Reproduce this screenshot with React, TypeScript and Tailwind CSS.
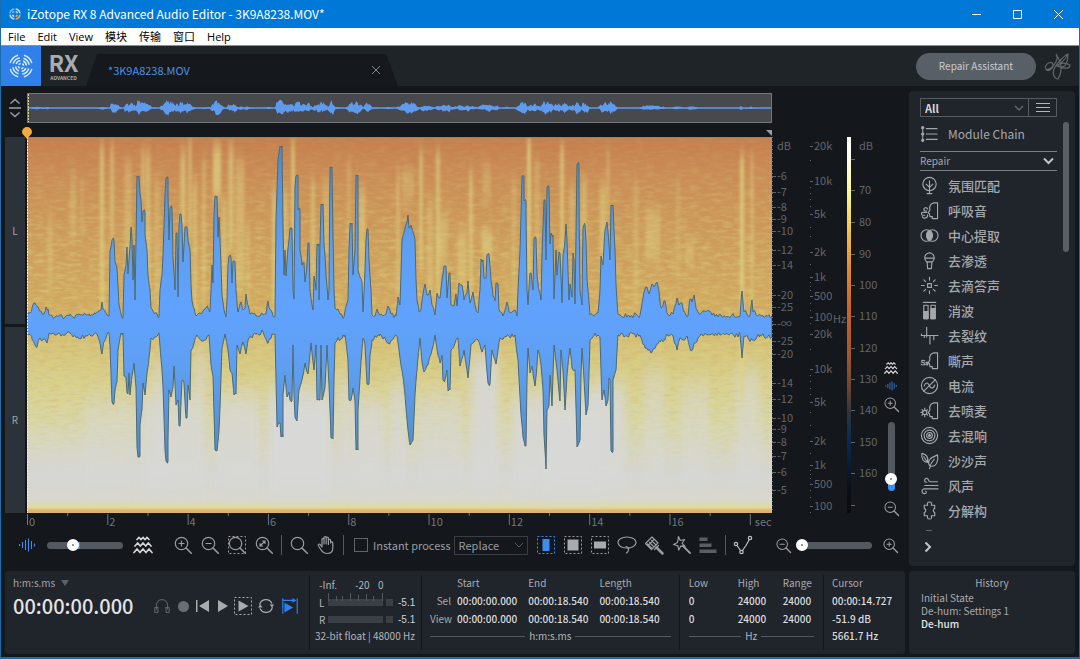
import React, { useMemo } from "react";

type Pt = [number, number];

const parse = (s: string): Pt[] =>
  s.trim().split(/\s+/).map((p) => p.split(",").map(Number) as Pt);

const TOP = parse(`27,316 30,313 32,308 35,303 38,307 41,311 44,314 46,307 48,309 49,315 55,317 60,315 65,317 70,314 73,317 80,315 85,314 90,316 95,314 98,312
101,310 102,302 103,309 106,313 109,316 110,251 112,240 114,240 115,262 117,268 119,305 121,314 123,317 124,275 126,265 127,247 128,274 130,247 131,227 132,238
133,280 134,245 135,300 136,240 137,176 139,176 140,193 141,200 142,222 143,211 145,212 145,235 147,250 148,275 150,290 151,308 153,311 157,314 159,316 160,290 162,275
163,255 165,195 166,178 168,178 168,195 169,240 170,208 172,208 173,258 175,290 176,233 177,233 178,297 179,225 180,214 181,214 182,225 183,262 185,227 187,227 188,240
190,250 191,285 192,301 194,308 196,316 200,313 203,311 206,308 208,308 210,312 211,290 212,265 213,283 214,215 215,196 217,196 218,237 219,217 220,237 221,265
222,295 224,310 226,317 227,300 228,265 229,256 231,258 232,283 233,261 235,262 236,290 238,312 240,304 241,302 243,310 245,308 246,294 248,305 250,314 256,316 260,316
266,314 268,301 269,308 273,316 275,316 276,220 278,160 280,146 282,146 283,225 284,275 285,250 286,276 288,248 289,240 290,228 292,228 293,290 294,299 295,187 296,176
298,176 298,210 300,210 300,250 302,265 304,263 305,282 307,264 308,243 309,243 310,290 312,305 313,310 314,276 316,290 317,244 319,244 319,300 320,245 321,204 323,204
324,245 325,255 326,275 328,300 329,290 330,167 332,167 333,235 334,290 335,308 338,309 340,314 344,317 347,303 348,300 349,250 350,223 352,223 353,275 355,250
356,175 358,175 358,270 360,277 362,283 363,312 365,270 366,240 367,229 368,229 369,260 371,290 372,315 375,316 377,309 380,315 386,314 388,306 391,314 396,316
398,297 400,305 402,240 404,233 407,222 408,215 409,228 411,225 413,232 415,240 416,280 417,300 419,312 421,308 424,288 425,284 427,295 430,290 432,305 435,315
437,293 440,298 442,280 444,266 446,266 447,298 449,273 450,273 451,305 454,306 456,294 457,306 459,283 462,285 464,300 467,293 468,281 470,303 473,292 475,305 478,313
480,290 481,259 483,260 484,278 486,278 487,255 489,254 491,280 493,296 495,301 496,283 498,285 499,310 503,316 507,302 509,312 515,310 517,316 518,290 520,250
521,215 522,176 524,176 524,201 526,202 526,215 527,290 528,305 530,273 531,273 533,290 534,238 536,238 537,275 539,290 541,300 542,255 544,200 545,200 546,260 547,187
549,187 550,244 551,233 553,235 554,299 556,250 557,275 559,252 560,253 562,303 563,255 565,240 566,224 567,240 569,300 570,284 572,297 573,253 574,260 575,304
577,164 579,164 579,200 580,290 582,305 583,228 585,225 586,240 587,280 590,315 594,316 598,313 600,290 601,256 603,265 605,230 607,222 609,245 610,260 611,205
613,205 615,250 616,285 618,314 621,316 640,315 644,292 647,287 649,294 652,284 654,287 657,282 659,292 661,308 665,301 667,313 673,314 677,298 679,305 682,303
684,311 688,316 690,299 692,302 694,295 696,308 700,314 709,311 712,315 740,316 742,291 744,312 750,316 752,300 753,312 760,315 772,316`);

const BOTTOM = parse(`27,333 32,339 37,347 40,338 43,340 47,343 49,333 55,335 70,333 78,338 88,335 97,334 100,343 102,354 104,342 107,334 109,334 110,345 112,402 114,403 115,390 117,382
118,350 121,333 123,333 124,376 126,378 127,393 128,394 129,373 130,395 132,376 134,363 136,387 137,447 138,457 140,456 140,425 142,410 143,383 145,395 147,373
149,358 151,338 155,337 159,333 162,370 163,387 165,450 166,461 168,461 168,440 169,390 171,397 173,387 174,366 176,405 178,400 179,426 180,426 182,380 184,383
186,418 187,418 188,385 190,400 191,350 194,343 197,335 203,341 209,335 211,365 213,376 215,450 217,451 219,430 220,408 222,348 225,334 228,350 230,370 232,373 234,395
236,394 237,345 240,354 243,342 246,354 248,340 253,335 256,334 263,332 268,343 272,334 275,334 276,380 277,427 280,423 281,437 283,437 283,395 285,375 287,397 289,392 290,400 292,400
293,345 294,395 295,417 297,421 299,390 302,380 305,363 308,374 311,343 314,370 316,345 317,400 319,400 320,400 321,345 322,400 325,387 327,345 329,385 331,438 333,439 334,380
335,343 343,335 345,335 348,360 349,400 351,400 353,388 355,401 356,450 358,450 358,410 361,362 363,338 365,345 367,384 369,384 370,355 372,340 380,334 388,343 397,336 402,370 405,395 408,430
410,445 413,440 415,395 417,370 420,338 422,362 424,372 428,365 432,350 435,335 438,355 440,363 442,355 443,380 445,380 447,370 448,391 450,390 451,350 455,343 458,338 460,366
464,350 468,378 471,345 478,340 482,352 485,345 488,383 490,384 492,350 496,364 500,338 515,335 518,360 521,415 523,437 525,446 526,446 527,380 528,348 530,373 532,366 535,386
537,365 538,350 541,365 543,390 544,435 546,469 547,410 549,405 550,375 552,406 554,345 558,380 560,401 561,350 563,370 565,410 567,375 570,348 572,368 575,370 577,447 580,440 581,375 582,348
584,380 586,415 588,405 590,340 595,333 600,338 602,400 604,390 606,406 608,400 609,378 610,380 611,451 613,451 613,380 616,370 618,335 640,335 645,348 652,352 660,342 665,340 667,335 673,336 677,350
680,338 683,340 687,336 691,351 698,338 702,335 740,335 742,358 744,336 752,340 760,335 772,337`);

const jitter = (x: number, seed: number) => {
  const v = Math.sin(x * 12.9898 + seed * 78.233) * 43758.5453;
  return v - Math.floor(v);
};

const densify = (pts: Pt[], seed: number): Pt[] => {
  const out: Pt[] = [];
  pts.forEach(([x, y], i) => {
    out.push([x, y]);
    const next = pts[i + 1];
    if (!next) return;
    for (let k = x + 1.5; k < next[0]; k += 1.5) {
      const t = (k - x) / (next[0] - x);
      out.push([k, y + (next[1] - y) * t + (jitter(k, seed) - 0.5) * 5]);
    }
  });
  return out;
};

const toPath = (top: Pt[], bottom: Pt[]) =>
  "M" + [...top, ...[...bottom].reverse()].map(([x, y]) => `${x} ${y.toFixed(1)}`).join("L") + "Z";

const STREAKS: [number, number, number, number, number][] = [
  [50, 215, 290, 5, 0.35], [73, 175, 240, 6, 0.3], [82, 180, 230, 3, 0.3], [102, 145, 315, 4, 0.65], [112, 145, 240, 4, 0.5],
  [128, 160, 290, 7, 0.35], [148, 150, 310, 5, 0.5], [143, 150, 200, 3, 0.6], [157, 180, 310, 6, 0.3], [183, 150, 230, 5, 0.6], [190, 137, 240, 3, 0.6],
  [195, 180, 310, 4, 0.5], [204, 160, 310, 3, 0.5], [217, 145, 200, 8, 0.7], [224, 200, 300, 5, 0.5], [231, 145, 250, 5, 0.6], [240, 160, 290, 9, 0.4],
  [248, 220, 310, 3, 0.4], [274, 190, 310, 4, 0.6], [285, 190, 260, 5, 0.5], [293, 140, 240, 3, 0.8], [313, 180, 280, 4, 0.5], [326, 180, 250, 7, 0.35],
  [349, 160, 240, 4, 0.3], [362, 190, 300, 7, 0.5], [398, 170, 300, 3, 0.5], [408, 170, 200, 12, 0.35], [421, 150, 270, 3, 0.7], [430, 200, 300, 6, 0.35],
  [438, 150, 310, 4, 0.6], [443, 215, 262, 9, 0.4], [462, 230, 290, 9, 0.45], [471, 170, 310, 3, 0.7], [487, 230, 260, 10, 0.6], [487, 165, 200, 8, 0.3],
  [514, 180, 310, 5, 0.3], [529, 137, 290, 3, 0.95], [537, 160, 260, 5, 0.35], [562, 145, 270, 3, 0.8], [572, 185, 240, 5, 0.4], [584, 180, 240, 6, 0.45],
  [603, 185, 260, 7, 0.5], [608, 150, 220, 3, 0.4], [636, 180, 310, 5, 0.3], [653, 210, 260, 15, 0.4], [678, 180, 280, 4, 0.25], [690, 240, 265, 8, 0.4],
  [742, 155, 400, 4, 0.75], [752, 155, 330, 3, 0.45],
];

const WHITES: [number, number, number, number, number][] = [
  [60, 440, 490, 70, 0.4], [110, 400, 485, 50, 0.5], [158, 360, 485, 10, 0.7], [170, 395, 490, 60, 0.8], [200, 350, 490, 10, 0.7], [238, 395, 490, 44, 0.8], [300, 390, 495, 64, 1],
  [345, 380, 490, 14, 0.7], [368, 400, 490, 32, 0.8], [398, 385, 490, 16, 0.8], [440, 395, 490, 44, 0.6], [485, 355, 490, 28, 0.9], [530, 395, 495, 36, 0.9], [572, 395, 495, 60, 1],
  [608, 385, 490, 34, 0.9], [655, 370, 490, 20, 0.5], [695, 385, 490, 26, 0.5], [748, 370, 490, 24, 0.6],
];

function Spectrogram() {
  const wave = useMemo(() => toPath(densify(TOP, 1), densify(BOTTOM, 2)), []);
  return (
    <svg className="block h-[376px] w-full" viewBox="27 137 745 376" preserveAspectRatio="none" colorInterpolationFilters="sRGB" role="img" aria-label="Spectrogram">
      <defs>
        <linearGradient id="heat" x1="0" y1="0" x2="0" y2="1">
          <stop offset="0" stopColor="#c57f4f" />
          <stop offset="0.1" stopColor="#ca8c56" />
          <stop offset="0.27" stopColor="#cd9c5c" />
          <stop offset="0.45" stopColor="#d1aa62" />
          <stop offset="0.55" stopColor="#d5c27a" />
          <stop offset="0.66" stopColor="#d8d294" />
          <stop offset="0.76" stopColor="#d8d8ae" />
          <stop offset="0.84" stopColor="#d7d7c6" />
          <stop offset="0.9" stopColor="#d5d5d3" />
          <stop offset="0.965" stopColor="#d8d8cc" />
          <stop offset="0.985" stopColor="#e0da9c" />
          <stop offset="0.994" stopColor="#dcb46a" />
          <stop offset="1" stopColor="#e5cf78" />
        </linearGradient>
        <linearGradient id="waveFill" x1="0" y1="0" x2="0" y2="1">
          <stop offset="0" stopColor="#538bc8" />
          <stop offset="0.32" stopColor="#5f9ff2" />
          <stop offset="0.5" stopColor="#60a2fe" />
          <stop offset="0.68" stopColor="#5f9ff2" />
          <stop offset="1" stopColor="#538bc0" />
        </linearGradient>
        <linearGradient id="fadeGrain" x1="0" y1="0" x2="0" y2="1">
          <stop offset="0" stopColor="#fff" stopOpacity="0.08" />
          <stop offset="0.3" stopColor="#fff" stopOpacity="0.5" />
          <stop offset="0.7" stopColor="#fff" stopOpacity="0.7" />
          <stop offset="0.82" stopColor="#fff" stopOpacity="0.3" />
          <stop offset="0.9" stopColor="#fff" stopOpacity="0" />
        </linearGradient>
        <mask id="grainMask">
          <rect x="27" y="137" width="745" height="376" fill="url(#fadeGrain)" />
        </mask>
        <filter id="grain" x="0" y="0" width="1" height="1">
          <feTurbulence type="fractalNoise" baseFrequency="0.09 0.3" numOctaves="3" seed="4" />
          <feColorMatrix values="0 0 0 0 0.86  0 0 0 0 0.83  0 0 0 0 0.5  2 0 0 0 -0.8" />
        </filter>
        <filter id="grainDark" x="0" y="0" width="1" height="1">
          <feTurbulence type="fractalNoise" baseFrequency="0.1 0.35" numOctaves="2" seed="11" />
          <feColorMatrix values="0 0 0 0 0.8  0 0 0 0 0.6  0 0 0 0 0.32  0 1.6 0 0 -0.7" />
        </filter>
        <filter id="soft" x="-1" y="-0.2" width="3" height="1.4">
          <feGaussianBlur stdDeviation="1.6 8" />
        </filter>
        <filter id="haze" x="-1" y="-0.5" width="3" height="2">
          <feGaussianBlur stdDeviation="5 12" />
        </filter>
      </defs>
      <rect x="27" y="137" width="745" height="376" fill="url(#heat)" />
      <g mask="url(#grainMask)">
        <rect x="27" y="137" width="745" height="376" filter="url(#grainDark)" opacity="0.6" />
        <rect x="27" y="137" width="745" height="376" filter="url(#grain)" />
      </g>
      {WHITES.map(([x, a, b, w, o], i) => (
        <rect key={i} x={x - w / 2} y={a} width={w} height={b - a} fill="#d8d8d6" opacity={o} filter="url(#haze)" />
      ))}
      {STREAKS.map(([x, a, b, w, o], i) => (
        <rect key={i} x={x - w / 2} y={a} width={w} height={b - a} fill="#ded486" opacity={o} filter="url(#soft)" />
      ))}
      <rect x="27" y="510" width="745" height="3" fill="#ddb66c" />
      <rect x="27" y="137" width="745" height="1" fill="#b87a4c" />
      <path d={wave} fill="url(#waveFill)" stroke="#4d6a72" strokeWidth="1" strokeLinejoin="round" />
      <path d="M27.5 137V513" stroke="#fff6b0" strokeDasharray="2 1" />
    </svg>
  );
}

function Overview() {
  const d = useMemo(() => {
    const amp = (x: number, v: number, seed: number) =>
      0.5 + Math.pow(Math.max(0, v - 13), 0.7) * 0.21 * (0.55 + jitter(x, seed) * 0.65);
    const top = densify(TOP, 5).map(([x, y]) => [x, 14 - amp(x, 324 - y, 8)] as Pt);
    const bottom = densify(BOTTOM, 6).map(([x, y]) => [x, 14 + amp(x, y - 324, 9)] as Pt);
    return toPath(top, bottom);
  }, []);
  return (
    <svg className="block h-[28px] w-full" viewBox="27 0 745 28" preserveAspectRatio="none" role="img" aria-label="Overview">
      <path d={d} fill="#5e9bee" />
      <path d="M27 14H772" stroke="#5e9bee" />
      <path d="M27.5 0V28" stroke="#e8d98a" strokeDasharray="2 1" />
    </svg>
  );
}

const AMP: [string, number][] = [
  ["-6", 176], ["-7", 192], ["-8", 207], ["-9", 219], ["-10", 231], ["-12", 250], ["-14", 265], ["-20", 295], ["-25", 307], ["-∞", 324],
  ["-25", 341], ["-20", 354], ["-14", 383], ["-12", 399], ["-10", 418], ["-9", 429], ["-8", 442], ["-7", 456], ["-6", 472], ["-5", 490],
];
const FREQ: [string, number][] = [
  ["20k", 146], ["10k", 181], ["5k", 214], ["2k", 252], ["1k", 277], ["500", 296], ["100", 317],
  ["20k", 334], ["10k", 369], ["5k", 402], ["2k", 441], ["1k", 465], ["500", 484], ["100", 506],
];
const FREQ_DOTS = [160, 187, 193, 199, 206, 227, 236, 264, 282, 286, 290, 303, 310, 323, 349, 375, 381, 388, 394, 412, 425, 453, 470, 474, 478, 490, 497, 512];
const LEVEL: [string, number][] = [
  ["70", 190], ["80", 222], ["90", 254], ["100", 285], ["110", 316], ["120", 348], ["130", 379], ["140", 410], ["150", 442], ["160", 473],
];

function Scales() {
  return (
    <svg className="block h-[376px] w-[110px] shrink-0 text-[11px]" viewBox="772 137 110 376" fill="#62666a" role="img" aria-label="Scales">
      <defs>
        <linearGradient id="bar" x1="0" y1="0" x2="0" y2="1">
          <stop offset="0" stopColor="#fff" />
          <stop offset="0.06" stopColor="#fffde8" />
          <stop offset="0.15" stopColor="#fdf78e" />
          <stop offset="0.24" stopColor="#f6c94e" />
          <stop offset="0.35" stopColor="#e08a30" />
          <stop offset="0.46" stopColor="#c9622c" />
          <stop offset="0.58" stopColor="#a4572f" />
          <stop offset="0.67" stopColor="#6b4432" />
          <stop offset="0.73" stopColor="#33343c" />
          <stop offset="0.8" stopColor="#0d2b55" />
          <stop offset="0.87" stopColor="#0a1c38" />
          <stop offset="0.94" stopColor="#0b0e12" />
          <stop offset="1" stopColor="#090b0e" />
        </linearGradient>
      </defs>
      <path d="M772.5 137V513" stroke="#62666a" strokeWidth="1" strokeDasharray="1 3" />
      <text x="777" y="150">dB</text>
      {AMP.map(([t, y]) => (
        <g key={y}>
          <rect x="772" y={y} width="4" height="1" />
          <text x="777" y={y + 4}>{t}</text>
        </g>
      ))}
      {FREQ.map(([t, y]) => (
        <g key={y}>
          <rect x="810" y={y} width="3" height="1" />
          <text x="814" y={y + 4}>{t}</text>
        </g>
      ))}
      {FREQ_DOTS.map((y) => (
        <rect key={y} x="810" y={y} width="1" height="1" />
      ))}
      <text x="833" y="323">Hz</text>
      <rect x="847" y="137" width="4" height="376" fill="url(#bar)" />
      <text x="859" y="150">dB</text>
      {LEVEL.map(([t, y]) => (
        <g key={y}>
          <rect x="851" y={y} width="4" height="1" />
          <text x="859" y={y + 4}>{t}</text>
        </g>
      ))}
      <rect x="851" y="159" width="4" height="1" />
      <rect x="851" y="505" width="4" height="1" />
    </svg>
  );
}

function TimeRuler() {
  const step = 10.78;
  return (
    <svg className="block h-[17px] w-full text-[11px]" fill="#72767a" role="img" aria-label="Time ruler">
      {Array.from({ length: 10 }, (_, i) => (
        <g key={i}>
          <rect x={`${i * step}%`} y="1" width="1" height="11" />
          <rect x={`${(i + 0.5) * step}%`} y="0" width="1" height="3" />
          <svg x={`${i * step}%`} overflow="visible">
            {i < 9 ? <text x="2" y="13">{i * 2}</text> : <text x="5" y="13">sec</text>}
          </svg>
        </g>
      ))}
    </svg>
  );
}

type IconProps = { children: React.ReactNode; className?: string };
function Icon({ children, className = "size-5" }: IconProps) {
  return (
    <svg className={`${className} shrink-0`} viewBox="0 0 20 20" fill="none" stroke="currentColor" strokeWidth="1.2" strokeLinecap="round" strokeLinejoin="round" aria-hidden="true">
      {children}
    </svg>
  );
}

const Lens = ({ children }: { children?: React.ReactNode }) => (
  <>
    <circle cx="8.5" cy="8.5" r="6.2" />
    <path d="M13 13l5.3 5.3" strokeWidth="1.6" />
    {children}
  </>
);
const Dashed = () => <rect x="1.5" y="1.5" width="17" height="17" strokeDasharray="2 2" strokeLinecap="butt" strokeWidth="1" />;
const WaveBars = () => <path d="M2.500 9v2M5.500 7v6M8.500 5v10M11.500 3.500v13M14.500 6v8M17.500 8.500v3" strokeWidth="1.1" strokeLinecap="butt" />;
const Zigzags = () => (
  <g strokeWidth="1.700" strokeLinejoin="miter">
    <path d="M4 4.500l2-2 2 2 2-2 2 2 2-2 2 2" />
    <path d="M2 11l2.700-3 2.600 3 2.700-3 2.700 3 2.600-3 2.700 3" />
    <path d="M1 17.500l3-3.500 3 3.500 3-3.500 3 3.500 3-3.500 3 3.500" />
  </g>
);
const Face = () => <path d="M11.500 3.500L14 2h4.500v16.500H13v-2h-2.500l-.5-3-1.500-1 2-3-.5-3z" />;

const MODULES: [string, React.ReactNode][] = [
  ["氛围匹配", <><circle cx="10" cy="8.500" r="7" /><path d="M10 5v13M7.500 18.500h5M10 12L6.500 8.500M10 12l3.500-3.500" /></>],
  ["呼吸音", <><Face /><path d="M8 8.500c-1-2.500-4-1.500-4 .5 0 1.500 2 1.500 3 1.500M7 12H3c-2 0-2 3 0 3h2M8 14.500c.5 4-5 4.500-5.500 2" /></>],
  ["中心提取", <><circle cx="7" cy="10" r="6" /><circle cx="13" cy="10" r="6" /><path d="M10 4.800a6 6 0 0 1 0 10.400a6 6 0 0 1 0-10.400z" fill="currentColor" /></>],
  ["去渗透", <><path d="M5 7a5 5 0 0 1 10 0c0 2-1 3.500-2 4.500H7C6 10.500 5 9 5 7zM5 7.500h10M7.500 11.500l.5 7h4l.5-7" /></>],
  ["去滴答声", <><rect x="8" y="8" width="4" height="4" /><path d="M10 1.500v3M10 15.500v3M1.500 10h3M15.500 10h3M4 4l2 2M14 14l2 2M4 16l2-2M14 6l2-2" /></>],
  ["消波", <><path d="M3.500 1.500h13" /><rect x="4" y="4.500" width="4.500" height="14" /><rect x="11.500" y="4.500" width="4.500" height="14" /><path d="M4 11h4.500v7.500H4zM11.500 8H16v10.500h-4.500z" fill="currentColor" /></>],
  ["去裂纹", <><path d="M1.500 8.500V10h17.500M7 1.500v10M10.500 10v9M14.500 10v4.500M4.500 10v2" /></>],
  ["嘶声", <><Face /><path d="M5 10.500c-1-1.200-3.500-.8-3.300.6.200 1.500 3.500.8 3.300 2.400-.2 1.600-3 1.600-3.800.4M8.300 12c-.8-.8-2-.4-2 .3 0 .9 2 .6 2 1.600 0 .9-1.600 1-2.200.3" /></>],
  ["电流", <><circle cx="10" cy="10" r="8.500" /><path d="M4 16L16 4M4.500 10.500c1-4 3.500-4 5-1 1.500 4 4.500 4.500 6 0" /></>],
  ["去喷麦", <><Face /><circle cx="5" cy="12" r="2.200" /><path d="M5 7.500v2M5 14.500v2M1 12h1.500M2 9l1.300 1.200M2 15l1.300-1.200M7.800 9.200L7 10M8 15l-1-1.200" /></>],
  ["去混响", <><circle cx="10" cy="10" r="8.500" /><circle cx="10" cy="10" r="5.700" /><circle cx="10" cy="10" r="3" /><circle cx="10" cy="10" r="1" fill="currentColor" /></>],
  ["沙沙声", <><path d="M2 2.500c5 1 7 4.500 6 9.500-4 0-7-3.500-6-9.500zM4 6l4 6M18.500 4c1 6-1 12-6 12-4 0-4.500-5-1.500-8 2-2 5-2 7.500-4zM10 18.500c1-5 3-8 5-10" /></>],
  ["风声", <><path d="M7 6.500c-3 .5-3-4.500.5-4 2 .5 1 3.500 3 3.500h8M5 10h14M19 13.500H5c-4 0-3.500 5 0 5 2 0 2-2 1-2.500" /></>],
  ["分解构", <path d="M4.500 4.500h3.500c0-1-1-3.500 2-3.500s2 2.500 2 3.500h3.500V8c-1 0-1.500 0-1.500 2s.5 2 1.500 2v3.500H12c0 1 1 3.500-2 3.500s-2-2.500-2-3.500H4.500V12C6 12 6 11 6 10s0-2-1.500-2z" />],
];

function IconButton({ label, children, className = "" }: { label: string; children: React.ReactNode; className?: string }) {
  return (
    <button type="button" aria-label={label} className={`flex shrink-0 items-center justify-center ${className}`}>
      {children}
    </button>
  );
}

const thumb =
  "[&::-webkit-slider-thumb]:size-3 [&::-webkit-slider-thumb]:appearance-none [&::-webkit-slider-thumb]:rounded-full [&::-webkit-slider-thumb]:border-[5px] [&::-webkit-slider-thumb]:border-white [&::-webkit-slider-thumb]:bg-[#777]";

const Rule = () => <span className="h-5 w-px shrink-0 bg-[#565b60]" />;
const Divider = () => <span className="my-1 w-px shrink-0 bg-[#14171b]" />;

function UnitLine({ unit }: { unit: string }) {
  return (
    <div className="flex h-4 items-center gap-1 leading-4 text-[#b3b6b9]">
      <span className="h-px flex-1 bg-[#54585e]" />
      {unit}
      <span className="h-px flex-1 bg-[#54585e]" />
    </div>
  );
}

function Toolbar() {
  return (
    <div className="flex h-[30px] items-center pr-[10px] text-[#9a9da0]">
      <span className="ml-4 text-[#3f8cf0]"><Icon><WaveBars /></Icon></span>
      <input type="range" aria-label="Waveform and spectrogram balance" defaultValue={31}
        className={`ml-[10px] h-[7px] w-[76px] appearance-none rounded-full bg-[linear-gradient(90deg,#54585f_35%,#3f8cf0_35%,#3f8cf0_43%,#54585f_43%)] ${thumb}`} />
      <span className="ml-[10px] text-[#d5d6d7]"><Icon><Zigzags /></Icon></span>
      <div className="ml-5 flex items-center gap-[7px]">
        <IconButton label="Zoom in"><Icon><Lens><path d="M8.500 6v5M6 8.500h5" /></Lens></Icon></IconButton>
        <IconButton label="Zoom out"><Icon><Lens><path d="M6 8.500h5" /></Lens></Icon></IconButton>
        <IconButton label="Zoom to selection"><Icon><Dashed /><Lens /></Icon></IconButton>
        <IconButton label="Zoom to fit"><Icon><Lens><path d="M6 11l5-5M8.500 6H11v2.500M6 8.500V11h2.500" /></Lens></Icon></IconButton>
        <Rule />
        <IconButton label="Zoom tool"><Icon><Lens /></Icon></IconButton>
        <IconButton label="Hand tool">
          <Icon><path d="M6 12V4.500c0-1.500 2-1.500 2 0V9V2.800c0-1.500 2.200-1.500 2.200 0V9V3.300c0-1.500 2.200-1.500 2.200 0V9.500V5.500c0-1.500 2.200-1.500 2.200 0V8c0-1.400 2.200-1.400 2.200 0v5c0 3-1.500 5.500-5.500 5.500-3 0-5-1.500-6.500-4L2.500 11c-.8-1.500 1-2.500 2-1.200z" /></Icon>
        </IconButton>
        <Rule />
      </div>
      <label className="ml-[10px] flex items-center gap-[5px] whitespace-nowrap text-[11px] leading-4">
        <input type="checkbox" className="size-[14px] appearance-none border border-[#62666a]" />
        Instant process
      </label>
      <div className="relative ml-[3px] flex items-center">
        <select aria-label="Process mode" className="h-[19px] w-[74px] appearance-none border border-[#3b3f44] bg-transparent pl-1 text-[11px] leading-4">
          <option>Replace</option>
        </select>
        <svg className="pointer-events-none absolute right-1 h-2 w-[10px]" viewBox="0 0 10 8" fill="none" stroke="#55595e" aria-hidden="true"><path d="M1 2l4 4 4-4" /></svg>
      </div>
      <div className="ml-2 flex items-center gap-[7px]">
        <IconButton label="Time selection" className="text-[#3f8cf0]"><Icon><Dashed /><path d="M6.500 4h7v12h-7z" fill="currentColor" stroke="none" /></Icon></IconButton>
        <IconButton label="Time-frequency selection"><Icon><Dashed /><path d="M4.500 4.500h11v11h-11z" fill="#a9acaf" stroke="none" /></Icon></IconButton>
        <IconButton label="Frequency selection"><Icon><Dashed /><path d="M4 6.500h12v7H4z" fill="#a9acaf" stroke="none" /></Icon></IconButton>
        <IconButton label="Lasso"><Icon><ellipse cx="10" cy="7.500" rx="9" ry="5.500" /><path d="M11 13c1 2 .5 3.500-1.500 5M9 11.500l3 1.500" /></Icon></IconButton>
        <IconButton label="Brush">
          <Icon><path d="M1.500 8.500L8 2l6 6-6.500 6.500zM10 4.500L4.500 10M3.500 9l4 4M5.500 7.500l4 4M7.500 5.500l4 4" /><path d="M12.500 12.500l6 6" strokeWidth="2.500" /><path d="M10.500 14.500l4-4" /></Icon>
        </IconButton>
        <IconButton label="Magic wand"><Icon><path d="M7.500 1.500l1.700 4 4.300-1-2.300 3.800 2.800 3.200-4.200-.4-2 4-.9-4.300L2.500 9.500 6.500 7.500z" /><path d="M12 11l7 7" strokeWidth="1.800" /></Icon></IconButton>
        <IconButton label="Harmonics"><Icon><g fill="#5b5f64" stroke="none"><path d="M1.500 2.500h8v3.500h-8zM1.500 8.500h12v3.500h-12zM1.500 14.500h17v3.500h-17z" /></g></Icon></IconButton>
        <Rule />
        <IconButton label="Gain envelope" className="text-[#c0c2c4]"><Icon><circle cx="3" cy="9" r="1.700" /><circle cx="8.500" cy="17" r="1.700" /><circle cx="17" cy="3" r="1.700" /><path d="M4 10.500l3.500 5M9.500 15.500L13 10.500l3.300-6" /></Icon></IconButton>
      </div>
      <div className="ml-auto flex items-center">
        <IconButton label="Zoom out time"><Icon className="size-[17px]"><Lens><path d="M6 8.500h5" /></Lens></Icon></IconButton>
        <input type="range" aria-label="Time zoom" defaultValue={0} className={`ml-1 h-[7px] w-[76px] appearance-none rounded-full bg-[#54585f] ${thumb}`} />
        <IconButton label="Zoom in time" className="ml-[10px]"><Icon className="size-[17px]"><Lens><path d="M8.500 6v5M6 8.500h5" /></Lens></Icon></IconButton>
      </div>
    </div>
  );
}

function Meter({ name }: { name: string }) {
  return (
    <div className="flex h-[17px] items-center leading-4">
      <span className="w-[9px]">{name}</span>
      <span className="h-[7px] w-[55px] bg-[#3a3e45]" />
      <span className="ml-[3px] size-[7px] bg-[#3a3e45]" />
      <span className="ml-[5px] font-['Liberation_Sans',sans-serif] text-[#cfd1d3]">-5.1</span>
    </div>
  );
}

function Footer() {
  const head = "p-0 text-left font-normal text-[#a8abae]";
  return (
    <section className="flex min-w-0 flex-1 rounded-[3px] bg-[#20242b] text-[10px]">
      <div className="w-[304px] shrink-0 pl-2 pt-1">
        <button type="button" className="flex items-center gap-[6px] leading-4 text-[#a0a3a6]">
          h:m:s.ms
          <svg className="h-[6px] w-2" viewBox="0 0 8 6" fill="#5d6166" aria-hidden="true"><path d="M0 0h8L4 6z" /></svg>
        </button>
        <div className="mt-[3px] flex items-center">
          <span className="w-[141px] text-[20px] font-medium leading-6 text-[#e2e3e4]">00:00:00.000</span>
          <div className="flex items-center gap-[5px] text-[#a9acaf]">
            <IconButton label="Monitor" className="text-[#676b70]"><Icon className="size-4"><path d="M3 14V9a7 7 0 0 1 14 0v5M3 12H1v6h4v-6zM15 12h4v6h-4v-6z" /></Icon></IconButton>
            <IconButton label="Record" className="size-4"><span className="size-[11px] rounded-full bg-[#6a6e73]" /></IconButton>
            <IconButton label="Rewind"><svg className="h-3 w-[13px]" viewBox="0 0 13 12" fill="currentColor"><path d="M0 0h1.500v12H0zM13 0v12L3 6z" /></svg></IconButton>
            <IconButton label="Play" className="ml-1"><svg className="h-3 w-[10px]" viewBox="0 0 10 12" fill="currentColor"><path d="M0 0v12l10-6z" /></svg></IconButton>
            <IconButton label="Play selection"><Icon><Dashed /><path d="M5.500 4.500v11l10-5.500z" fill="currentColor" stroke="none" /></Icon></IconButton>
            <IconButton label="Loop"><Icon className="size-4"><path d="M2.200 8a8 8 0 0 1 15-1.500M17.800 12a8 8 0 0 1-15 1.500" strokeWidth="1.600" /><path d="M14.500 8h5.500l-2.500 4zM0 12h5.500L3 8z" fill="currentColor" stroke="none" /></Icon></IconButton>
            <IconButton label="Playhead follows" className="ml-[3px] text-[#2f80ee]"><Icon className="size-4"><path d="M1 1v18M19 1v18M2 3h14" strokeWidth="1.500" strokeDasharray="3 1" /><path d="M3 6v12l11-6zM13 0v6l5-3z" fill="currentColor" stroke="none" /></Icon></IconButton>
          </div>
        </div>
      </div>
      <Divider />
      <div className="w-[111px] shrink-0 pl-[5px] pt-[6px] text-[#b3b6b9]">
        <div className="flex h-4 leading-4">
          <span className="w-9 pl-1">-Inf.</span><span className="w-[23px] pl-1">-20</span><span className="pl-1">0</span>
        </div>
        <div className="relative pl-1 pt-px">
          <svg className="absolute left-[13px] top-0 h-2 w-[55px]" viewBox="0 0 55 8" aria-hidden="true"><path d="M.5 0v8M8.500 3v5M14.500 3v5M22.500 0v8M30.500 2v6M38.500 1v7M45.500 3v5M54.500 0v8" stroke="#54585e" /></svg>
          <Meter name="L" />
          <Meter name="R" />
        </div>
        <div className="whitespace-nowrap leading-4">32-bit float | 48000 Hz</div>
      </div>
      <Divider />
      <div className="min-w-0 grow-[5] basis-[256px] px-2 pt-[3px]">
        <table className="w-full table-fixed border-collapse whitespace-nowrap leading-[18px]">
          <thead><tr><td className="w-[27px] p-0" /><th className={head}>Start</th><th className={head}>End</th><th className={head}>Length</th></tr></thead>
          <tbody className="font-medium text-[#dcddde]">
            {["Sel", "View"].map((r) => (
              <tr key={r} className="h-[18px]">
                <th className="p-0 pr-[6px] text-right font-normal text-[#a8abae]">{r}</th>
                <td className="p-0">00:00:00.000</td><td className="p-0">00:00:18.540</td><td className="p-0">00:00:18.540</td>
              </tr>
            ))}
          </tbody>
        </table>
        <UnitLine unit="h:m:s.ms" />
      </div>
      <Divider />
      <div className="min-w-0 grow-[3] basis-[143px] px-[9px] pt-[3px]">
        <table className="w-full table-fixed border-collapse whitespace-nowrap leading-[18px]">
          <thead><tr><th className={`${head} w-[49px]`}>Low</th><th className={`${head} w-[45px]`}>High</th><th className={head}>Range</th></tr></thead>
          <tbody className="font-medium text-[#dcddde]">
            {[0, 1].map((r) => (
              <tr key={r} className="h-[18px]"><td className="p-0">0</td><td className="p-0">24000</td><td className="p-0">24000</td></tr>
            ))}
          </tbody>
        </table>
        <UnitLine unit="Hz" />
      </div>
      <Divider />
      <div className="w-[81px] shrink-0 whitespace-nowrap pl-2 pt-[3px] font-medium leading-[18px] text-[#dcddde]">
        <div className="font-normal text-[#a8abae]">Cursor</div>
        <div>00:00:14.727</div>
        <div>-51.9 dB</div>
        <div className="leading-4">5661.7 Hz</div>
      </div>
    </section>
  );
}

function ModulePanel() {
  return (
    <aside className="mr-1 mt-[5px] flex w-[166px] shrink-0 flex-col rounded-[4px] bg-[#20242b] pl-[11px] pt-[7px] text-[#a4a8ab]">
      <div className="flex w-[137px] border border-[#565b60]">
        <div className="relative flex flex-1 items-center">
          <select aria-label="Module filter" className="h-[17px] w-full appearance-none bg-transparent pl-1 text-[11px] font-bold leading-4 text-[#d5d6d8]">
            <option>All</option>
          </select>
          <svg className="pointer-events-none absolute right-1 h-2 w-[10px]" viewBox="0 0 10 8" fill="none" stroke="#62666b" strokeWidth="1.500" aria-hidden="true"><path d="M1 2l4 4 4-4" /></svg>
        </div>
        <button type="button" aria-label="Menu" className="flex w-[28px] flex-col items-center justify-center gap-[3px] border-l border-[#565b60]">
          <span className="h-px w-[14px] bg-[#b4b7ba]" /><span className="h-px w-[14px] bg-[#b4b7ba]" /><span className="h-px w-[14px] bg-[#b4b7ba]" />
        </button>
      </div>
      <div className="flex">
        <div className="w-[137px]">
          <button type="button" className="flex h-[34px] w-full items-center gap-[10px] text-[12px] leading-4">
            <Icon className="size-[18px]"><path d="M3 3v14M7 4h12M7 10h12M7 16h12" /><circle cx="3" cy="3" r="1.200" fill="currentColor" /><circle cx="3" cy="10" r="1.200" fill="currentColor" /><circle cx="3" cy="17" r="1.200" fill="currentColor" /></Icon>
            Module Chain
          </button>
          <button type="button" className="flex h-5 w-full items-center justify-between border-y border-[#7b7f83] pr-[3px] text-[10px] leading-4">
            Repair
            <svg className="h-2 w-[11px]" viewBox="0 0 11 8" fill="none" stroke="#c0c3c6" strokeWidth="2" aria-hidden="true"><path d="M1 1.500l4.500 4.500L10 1.500" /></svg>
          </button>
          <ul className="pt-[2px]">
            {MODULES.map(([name, icon]) => (
              <li key={name}>
                <button type="button" className="flex h-[25px] w-full items-center gap-[9px] text-[13px] font-medium leading-4">
                  <Icon className="size-[19px]">{icon}</Icon>
                  {name}
                </button>
              </li>
            ))}
          </ul>
          <div className="ml-[6px] mt-[7px] h-px w-[6px] bg-[#5f6368]" />
        </div>
        <div className="ml-[6px] mt-[5px] h-[130px] w-[6px] rounded-full bg-[#5a5f66]" />
      </div>
      <button type="button" aria-label="Show more" className="mb-3 ml-1 mt-[10px] w-3">
        <svg className="h-3 w-2" viewBox="0 0 8 12" fill="none" stroke="#c4c7ca" strokeWidth="2" aria-hidden="true"><path d="M1.500 1.500L6 6l-4.500 4.500" /></svg>
      </button>
    </aside>
  );
}

export default function App() {
  return (
    <div className="flex min-h-screen flex-col border-x border-b-2 border-[#1b6cab] bg-[#14171b] font-['Noto_Sans_CJK_SC',sans-serif]">
      <header className="flex h-7 items-center bg-[#0078d7] pl-2 text-[12px] leading-4 text-white">
        <svg className="size-3" viewBox="0 0 12 12" fill="none" strokeWidth="1.500" aria-hidden="true">
          <path d="M1 5.300A5 5 0 0 1 5.300 1M3.500 5.300A2.500 2.500 0 0 1 5.300 3.500" stroke="#7fb6ee" /><path d="M6.700 1A5 5 0 0 1 11 5.300M6.700 3.500A2.500 2.500 0 0 1 8.500 5.300" stroke="#c9d9ea" />
          <path d="M1 6.700A5 5 0 0 0 5.300 11M3.500 6.700A2.500 2.500 0 0 0 5.300 8.500" stroke="#c9d9ea" /><path d="M6.700 11A5 5 0 0 0 11 6.700M6.700 8.500A2.500 2.500 0 0 0 8.500 6.700" stroke="#e0a64f" />
        </svg>
        <h1 className="ml-[6px] flex-1">iZotope RX 8 Advanced Audio Editor - 3K9A8238.MOV*</h1>
        <div className="flex items-center gap-8 pr-4">
          <button type="button" aria-label="Minimize"><svg className="size-[9px]" viewBox="0 0 9 9" stroke="#fff"><path d="M0 4.500h9" /></svg></button>
          <button type="button" aria-label="Maximize"><svg className="size-[9px]" viewBox="0 0 9 9" stroke="#fff" fill="none"><path d="M.5.5h8v8h-8z" /></svg></button>
          <button type="button" aria-label="Close"><svg className="size-[9px]" viewBox="0 0 9 9" stroke="#fff"><path d="M0 0l9 9M9 0L0 9" /></svg></button>
        </div>
      </header>
      <nav className="flex h-[17px] items-center gap-3 bg-white pl-[7px] font-['Open_Sans','Noto_Sans_CJK_SC',sans-serif] text-[11px] leading-4 text-black">
        {["File", "Edit", "View", "模块", "传输", "窗口", "Help"].map((m) => (
          <button key={m} type="button">{m}</button>
        ))}
      </nav>
      <div className="flex h-[41px] items-stretch border-t border-[#8d9091] bg-[#1f2428]">
        <div className="flex w-10 items-center justify-center bg-[#2f80ea]">
          <svg className="size-[26px]" viewBox="0 0 26 26" fill="none" stroke="#d6e8fb" strokeWidth="1.500" aria-label="iZotope" role="img">
            <circle cx="13" cy="13" r="2.600" pathLength="4" strokeDasharray=".6 .4" strokeDashoffset="-.35" />
            <circle cx="13" cy="13" r="5.400" pathLength="4" strokeDasharray=".66 .34" strokeDashoffset="-.27" />
            <circle cx="13" cy="13" r="8.200" pathLength="4" strokeDasharray=".7 .3" strokeDashoffset="-.2" />
            <circle cx="13" cy="13" r="11.200" pathLength="4" strokeDasharray=".66 .34" strokeDashoffset="-.17" />
          </svg>
        </div>
        <div className="flex w-[45px] flex-col items-center justify-center font-bold text-[#a9acae]">
          <span className="text-[23px] leading-[22px]">RX</span>
          <span className="mt-[2px] whitespace-nowrap text-[5px] leading-[6px]">ADVANCED</span>
        </div>
        <div className="mt-2 flex w-[312px] items-center justify-between bg-[#15181c] pb-px pl-[22px] pr-[18px] [clip-path:polygon(11px_0,300px_0,312px_100%,0_100%)]">
          <span className="text-[11px] leading-4 text-[#4a90e8]">*3K9A8238.MOV</span>
          <button type="button" aria-label="Close tab"><svg className="size-2" viewBox="0 0 8 8" stroke="#84878a"><path d="M0 0l8 8M8 0L0 8" /></svg></button>
        </div>
        <div className="ml-auto flex items-center gap-2 pr-2">
          <button type="button" className="h-[27px] w-[120px] rounded-full bg-[#585f67] text-[10px] leading-4 text-[#c8cbce]">Repair Assistant</button>
          <svg className="h-7 w-[27px]" viewBox="0 0 27 28" fill="none" stroke="#62676b" strokeWidth="1.200" aria-hidden="true">
            <path d="M1 16C3 9 10 9 9 14C8 18 3 20 2 17C6 19 16 9 12 2C16 8 20 17 14 27C11 27 7 22 11 15C14 10 21 3 24 2C24 9 22 16 16 15C12 13 18 9 26 13C26 17 20 17 13 14C17 10 22 8 23 3" />
          </svg>
        </div>
      </div>
      <main className="flex flex-1">
        <div className="flex min-w-0 flex-1 flex-col">
          <div className="flex pt-[7px]">
            <button type="button" aria-label="Collapse overview" className="flex w-[26px] shrink-0 items-center justify-center pl-[2px]">
              <svg className="h-5 w-3" viewBox="0 0 12 20" fill="none" stroke="#9fa2a5" strokeWidth="1.400"><path d="M1.500 5.500L6 1.500l4.500 4M0 10h12M1.500 14.500L6 18.500l4.500-4" /></svg>
            </button>
            <div className="min-w-0 flex-1 border border-[#737678] bg-[#47494c]"><Overview /></div>
            <div className="w-[137px] shrink-0" />
          </div>
          <div className="relative mt-[14px] flex">
            <div className="flex w-[26px] shrink-0 flex-col gap-[3px] pl-1 pr-[2px] text-[10px] text-[#a0a4a8]">
              <div className="flex flex-1 items-center justify-center bg-[#2c323a]">L</div>
              <div className="flex flex-1 items-center justify-center bg-[#2c323a]">R</div>
            </div>
            <div className="relative min-w-0 flex-1">
              <Spectrogram />
              <svg className="absolute -left-[5px] -top-[10px] h-3 w-[10px]" viewBox="0 0 10 12" fill="#f0ab3c" aria-hidden="true"><path d="M0 5a5 5 0 0 1 10 0c0 2.500-3 4-5 7C3 9 0 7.500 0 5z" /></svg>
              <svg className="absolute -top-[7px] right-0 size-[6px]" viewBox="0 0 6 6" fill="#9a9da0" aria-hidden="true"><path d="M0 0h6v6z" /></svg>
            </div>
            <Scales />
            <div className="flex w-[27px] shrink-0 flex-col items-center justify-end pr-[9px] text-[#9a9da0]">
              <span className="text-[#d5d6d7]"><Icon className="size-[14px]"><Zigzags /></Icon></span>
              <span className="mt-1 text-[#3f8cf0]"><Icon className="size-[14px]"><WaveBars /></Icon></span>
              <IconButton label="Zoom in amplitude" className="mt-[3px]"><Icon className="size-[17px]"><Lens><path d="M8.500 6v5M6 8.500h5" /></Lens></Icon></IconButton>
              <input type="range" aria-label="Amplitude zoom" defaultValue={10}
                className={`mb-[9px] mt-[9px] h-[69px] w-[7px] appearance-none rounded-full bg-[linear-gradient(0deg,#3f8cf0_16%,#54585f_16%)] [direction:rtl] [writing-mode:vertical-lr] ${thumb}`} />
              <IconButton label="Zoom out amplitude" className="-mb-1"><Icon className="size-[17px]"><Lens><path d="M6 8.500h5" /></Lens></Icon></IconButton>
            </div>
          </div>
          <div className="pl-[26px] pr-[137px]"><TimeRuler /></div>
          <Toolbar />
        </div>
        <ModulePanel />
      </main>
      <footer className="mx-1 mb-[3px] mt-[5px] flex min-h-[83px] gap-1">
        <Footer />
        <section className="w-[166px] shrink-0 rounded-[3px] bg-[#20242b] px-3 pt-1 text-[10px] leading-[13px] text-[#a8abae]">
          <h2 className="text-center leading-4">History</h2>
          <ul>
            <li>Initial State</li>
            <li>De-hum: Settings 1</li>
            <li className="font-medium text-[#e4e5e6]">De-hum</li>
          </ul>
        </section>
      </footer>
    </div>
  );
}
